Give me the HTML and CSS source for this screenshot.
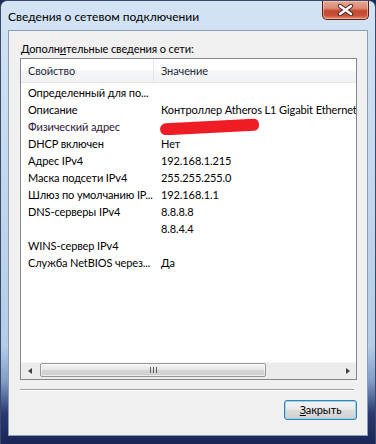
FILE: index.html
```html
<!DOCTYPE html>
<html>
  <head>
    <meta charset="utf-8">
    <title>Сведения о сетевом подключении</title>
    <link rel="stylesheet" href="styles.css">
  </head>
  <body>
    <div class="window">
      <div class="titlebar">
        <span class="titlebar__text">Сведения о сетевом подключении</span>
        <button type="button" class="titlebar__close">
          <svg width="17" height="12" viewBox="0 0 17 12">
            <path d="M3 2 L14 10 M14 2 L3 10" stroke="#4a2a2a" stroke-width="4.4" stroke-linecap="round"/>
            <path d="M3 2 L14 10 M14 2 L3 10" stroke="#ffffff" stroke-width="2.4" stroke-linecap="round"/>
          </svg>
        </button>
      </div>
      <div class="client">
        <div class="client__label">Дополн<u>и</u>тельные сведения о сети:</div>
        <div class="details">
          <div class="details__header">
            <span class="details__name">Свойство</span>
            <span class="details__value">Значение</span>
          </div>
          <ul class="details__rows">
            <li class="details__row"><span class="details__name">Определенный для по...</span><span class="details__value"></span></li>
            <li class="details__row"><span class="details__name">Описание</span><span class="details__value">Контроллер Atheros L1 Gigabit Ethernet</span></li>
            <li class="details__row"><span class="details__name details__name--mac">Физический адрес</span><span class="details__value"><span class="details__hidden"></span></span></li>
            <li class="details__row"><span class="details__name">DHCP включен</span><span class="details__value">Нет</span></li>
            <li class="details__row"><span class="details__name">Адрес IPv4</span><span class="details__value">192.168.1.215</span></li>
            <li class="details__row"><span class="details__name">Маска подсети IPv4</span><span class="details__value">255.255.255.0</span></li>
            <li class="details__row"><span class="details__name">Шлюз по умолчанию IP...</span><span class="details__value">192.168.1.1</span></li>
            <li class="details__row"><span class="details__name">DNS-серверы IPv4</span><span class="details__value">8.8.8.8</span></li>
            <li class="details__row"><span class="details__name"></span><span class="details__value">8.8.4.4</span></li>
            <li class="details__row"><span class="details__name">WINS-сервер IPv4</span><span class="details__value"></span></li>
            <li class="details__row"><span class="details__name">Служба NetBIOS через...</span><span class="details__value">Да</span></li>
          </ul>
          <div class="scrollbar">
            <span class="scrollbar__arrow scrollbar__arrow--left"></span>
            <div class="scrollbar__track">
              <div class="scrollbar__thumb"><span class="scrollbar__grip"></span></div>
            </div>
            <span class="scrollbar__arrow scrollbar__arrow--right"></span>
          </div>
        </div>
        <div class="client__sep"></div>
        <div class="client__footer">
          <button type="button" class="client__close"><u>З</u>акрыть</button>
        </div>
      </div>
    </div>
  </body>
</html>
```

FILE: styles.css
```css
body {
    margin: 0;
    font-family: Lato, "Noto Sans", sans-serif;
    font-size: 11px;
    letter-spacing: -0.1px;
    color: #000;
    background: #1b2758;
}
ul, li {
    margin: 0;
    padding: 0;
    list-style-type: none;
}
button {
    font: inherit;
    letter-spacing: inherit;
    color: inherit;
    padding: 0;
}

.window {
    width: 376px;
    height: 444px;
    box-sizing: border-box;
    border: 1px solid #3c4a6a;
    border-bottom: none;
    border-radius: 7px 7px 0 0;
    background: linear-gradient(to bottom, #d3e3f4 0, #c3d8ee 40%, #b4cce8 78%, #7f9bc6 86%, #2a3a72 93%, #1a2556 100%);
    display: flex;
    flex-direction: column;
}

.titlebar {
    height: 29px;
    display: flex;
    justify-content: space-between;
    align-items: flex-start;
}
.titlebar__text {
    margin: 8px 0 0 7px;
    font-size: 12px;
    letter-spacing: 0;
    line-height: 15px;
}
.titlebar__close {
    width: 47px;
    height: 19px;
    margin-right: 6px;
    border: 1px solid #5a2018;
    border-top: none;
    border-radius: 0 0 5px 5px;
    background: linear-gradient(to bottom, #e8a594 0, #dc8a74 40%, #c6452f 55%, #c8523a 80%, #df8a6b 100%);
    box-shadow: inset 0 0 0 1px rgba(255, 220, 210, 0.5);
    display: flex;
    align-items: center;
    justify-content: center;
}

.client {
    flex: 1;
    margin: 0 7px 8px 7px;
    border: 1px solid #8c9db5;
    background: #f0f0f0;
    padding: 9px 10px 0 11px;
    display: flex;
    flex-direction: column;
}
.client__label {
    margin-left: 1px;
    line-height: 17px;
    height: 17px;
}
.client__label u {
    text-decoration-thickness: 1px;
}

.details {
    margin-top: 1px;
    height: 322px;
    box-sizing: border-box;
    border: 1px solid #828790;
    background: #fff;
    display: flex;
    flex-direction: column;
}
.details__header {
    height: 24px;
    display: flex;
    align-items: center;
    background: linear-gradient(to bottom, #ffffff 0, #ffffff 45%, #f4f5f7 55%, #f1f2f4 100%);
    border-bottom: 1px solid #e5e5e5;
    box-sizing: border-box;
    color: #1e2a3a;
}
.details__header .details__name {
    height: 24px;
    line-height: 24px;
    border-right: 1px solid #e3e5e8;
}
.details__rows {
    flex: 1;
    padding-top: 1px;
}
.details__row {
    height: 17px;
    line-height: 17px;
    display: flex;
}
.details__name {
    width: 133px;
    flex: none;
    box-sizing: border-box;
    padding-left: 7px;
    white-space: nowrap;
    overflow: hidden;
}
.details__name--mac {
    color: #2a1236;
}
.details__value {
    flex: 1;
    min-width: 0;
    padding-left: 7px;
    white-space: nowrap;
    overflow: hidden;
    display: flex;
    align-items: center;
}
.details__hidden {
    display: block;
    flex: none;
    width: 99px;
    height: 12px;
    margin: 1px 0 0 -1px;
    border-radius: 6px 5px 5px 6px;
    background: #ee1c25;
    transform: rotate(-3deg);
}

.scrollbar {
    height: 17px;
    display: flex;
    background: #ececec;
    border-top: 1px solid #f6f6f6;
    box-sizing: border-box;
}
.scrollbar__arrow {
    width: 17px;
    flex: none;
    display: flex;
    align-items: center;
    justify-content: center;
}
.scrollbar__arrow::before {
    content: "";
    border-top: 3.5px solid transparent;
    border-bottom: 3.5px solid transparent;
}
.scrollbar__arrow--left::before {
    border-right: 4px solid #404040;
}
.scrollbar__arrow--right::before {
    border-left: 4px solid #404040;
}
.scrollbar__track {
    flex: 1;
    padding: 0 2px 1px 2px;
}
.scrollbar__thumb {
    width: 226px;
    height: 14px;
    box-sizing: border-box;
    border: 1px solid #979797;
    border-radius: 2px;
    background: linear-gradient(to bottom, #f3f3f3 0, #e8e8e8 45%, #d5d5d5 55%, #cfcfcf 100%);
    box-shadow: inset 0 0 0 1px rgba(255, 255, 255, 0.6);
    display: flex;
    align-items: center;
    justify-content: center;
}
.scrollbar__grip {
    width: 7px;
    height: 6px;
    background: repeating-linear-gradient(to right, #5b5b5b 0, #5b5b5b 1px, transparent 1px, transparent 3px);
}

.client__sep {
    margin: 9px 3px 0 0;
    height: 1px;
    background: #a0a0a0;
    border-bottom: 1px solid #fdfdfd;
}
.client__footer {
    display: flex;
    justify-content: flex-end;
    padding-top: 9px;
}
.client__close {
    width: 73px;
    height: 20px;
    border: 1px solid #3c7fb1;
    border-radius: 3px;
    background: linear-gradient(to bottom, #f2f2f2 0, #ebebeb 45%, #dddddd 50%, #cfcfcf 100%);
    box-shadow: inset 0 0 0 1px #8fd6f5;
    line-height: 16px;
}
```
